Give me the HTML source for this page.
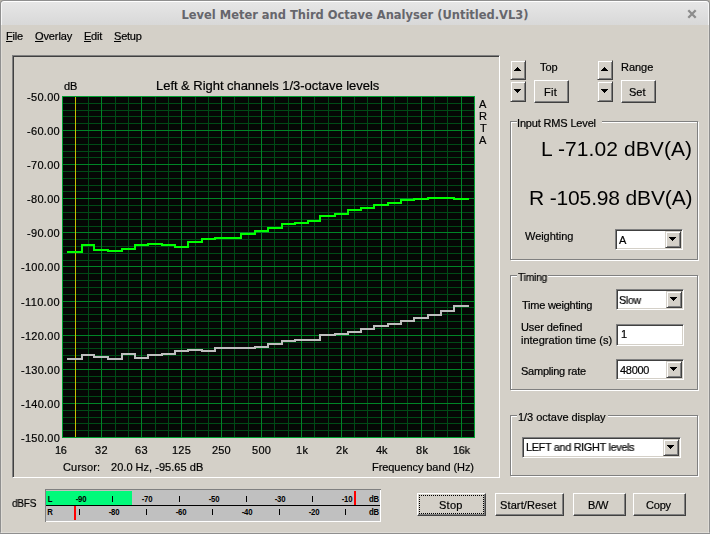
<!DOCTYPE html>
<html><head><meta charset="utf-8"><title>Level Meter and Third Octave Analyser</title>
<style>
html,body{margin:0;padding:0}
body{width:710px;height:534px;overflow:hidden;background:#d4d0c8;position:relative;font-family:"Liberation Sans",sans-serif;color:#000}
.abs{position:absolute}
.t{white-space:pre;font-family:"Liberation Sans",sans-serif;will-change:transform;-webkit-text-stroke:0.2px #000}
.big{-webkit-text-stroke:0}
.grp{box-sizing:border-box;border:1px solid #808080;box-shadow:1px 1px 0 #fff, inset 1px 1px 0 #fff}
.sunk{box-sizing:border-box;border-top:1px solid #808080;border-left:1px solid #808080;border-right:1px solid #fff;border-bottom:1px solid #fff;box-shadow:inset 1px 1px 0 #404040}
.btn{box-sizing:border-box;background:#d4d0c8;border-top:1px solid #fff;border-left:1px solid #fff;border-right:1px solid #404040;border-bottom:1px solid #404040;box-shadow:inset -1px -1px 0 #808080}
.cb{border-top-color:#d4d0c8;border-left-color:#d4d0c8;box-shadow:inset 1px 1px 0 #fff, inset -1px -1px 0 #808080}
.focus{border:1px dotted #000}
.edit{box-sizing:border-box;background:#fff;border-top:1px solid #808080;border-left:1px solid #808080;border-right:1px solid #fff;border-bottom:1px solid #fff;box-shadow:inset 1px 1px 0 #404040, inset -1px -1px 0 #d4d0c8}
.ml{font-size:9px;line-height:9px;font-weight:bold;text-align:center;white-space:pre;letter-spacing:-0.2px;transform:scaleX(0.86)}
#tb{left:0;top:0;width:710px;height:25px;box-sizing:border-box;border:1px solid #8f8f8f;border-bottom:none;border-radius:4px 4px 0 0;background:linear-gradient(#e7e7e7,#d8d8d8);box-shadow:inset 0 1px 0 #fff, inset 1px 0 0 #f6f6f6, inset -1px 0 0 #f6f6f6}
#tt{left:0;top:7px;width:710px;text-align:center;font-family:"DejaVu Sans Condensed","DejaVu Sans",sans-serif;font-weight:bold;font-size:12.75px;line-height:15px;color:#66666c;white-space:pre}
#lb{left:0;top:25px;width:1px;height:509px;background:#8f8f8f;box-shadow:1px 0 0 rgba(255,255,255,0.25)}
#rb{left:709px;top:25px;width:1px;height:509px;background:#8f8f8f;box-shadow:-1px 0 0 rgba(255,255,255,0.25)}
#bb{left:0;top:533px;width:710px;height:1px;background:#8f8f8f;box-shadow:0 -1px 0 rgba(255,255,255,0.25)}
</style></head><body>
<div class="abs" style="left:0;top:0;width:710px;height:6px;background:#b6b2a8"></div>
<div class="abs" id="tb"></div>
<div class="abs" id="tt">Level Meter and Third Octave Analyser (Untitled.VL3)</div>
<svg class="abs" style="left:687px;top:9px" width="10" height="10" viewBox="0 0 10 10"><path d="M1.3 1.3 L8.7 8.7 M8.7 1.3 L1.3 8.7" stroke="#8c8c8c" stroke-width="2.3" fill="none"/></svg>
<div class="abs" id="lb"></div><div class="abs" id="rb"></div><div class="abs" id="bb"></div>
<div class="abs grp" style="left:510px;top:121px;width:188px;height:139px;"></div>
<div class="abs " style="left:517px;top:121px;width:85px;height:2px;background:#d4d0c8;"></div>
<div class="abs grp" style="left:510px;top:275px;width:188px;height:115px;"></div>
<div class="abs " style="left:517px;top:275px;width:31px;height:2px;background:#d4d0c8;"></div>
<div class="abs grp" style="left:510px;top:415px;width:188px;height:61px;"></div>
<div class="abs " style="left:517px;top:415px;width:91px;height:2px;background:#d4d0c8;"></div>
<div class="abs sunk" style="left:12px;top:55px;width:488px;height:423px;"></div>
<div class="abs btn cb" style="left:510px;top:60px;width:16px;height:20px;"><span class="abs" style="left:3px;top:5px;line-height:0"><svg width="7" height="4" viewBox="0 0 7 4" shape-rendering="crispEdges"><path d="M3 0h1v1h1v1h1v1h1v1h-7v-1h1v-1h1v-1h1z" fill="#000"/></svg></span></div>
<div class="abs btn cb" style="left:510px;top:81px;width:16px;height:21px;"><span class="abs" style="left:3px;top:6px;line-height:0"><svg width="7" height="4" viewBox="0 0 7 4" shape-rendering="crispEdges"><path d="M0 0h7v1h-1v1h-1v1h-1v1h-1v-1h-1v-1h-1v-1h-1z" fill="#000"/></svg></span></div>
<div class="abs btn cb" style="left:597px;top:60px;width:16px;height:20px;"><span class="abs" style="left:3px;top:5px;line-height:0"><svg width="7" height="4" viewBox="0 0 7 4" shape-rendering="crispEdges"><path d="M3 0h1v1h1v1h1v1h1v1h-7v-1h1v-1h1v-1h1z" fill="#000"/></svg></span></div>
<div class="abs btn cb" style="left:597px;top:81px;width:16px;height:21px;"><span class="abs" style="left:3px;top:6px;line-height:0"><svg width="7" height="4" viewBox="0 0 7 4" shape-rendering="crispEdges"><path d="M0 0h7v1h-1v1h-1v1h-1v1h-1v-1h-1v-1h-1v-1h-1z" fill="#000"/></svg></span></div>
<div class="abs btn" style="left:534px;top:80px;width:35px;height:23px;"></div>
<div class="abs btn" style="left:621px;top:80px;width:35px;height:23px;"></div>
<div class="abs btn" style="left:417px;top:493px;width:69px;height:23px;"><div class="abs focus" style="left:1px;top:1px;width:63px;height:17px"></div></div>
<div class="abs btn" style="left:495px;top:493px;width:69px;height:23px;"></div>
<div class="abs btn" style="left:573px;top:493px;width:53px;height:23px;"></div>
<div class="abs btn" style="left:633px;top:493px;width:53px;height:23px;"></div>
<div class="abs edit" style="left:615px;top:229px;width:68px;height:21px;"><div class="abs btn cb" style="right:1px;top:1px;width:16px;height:17px"><span class="abs" style="left:3px;top:4px;line-height:0"><svg width="7" height="4" viewBox="0 0 7 4" shape-rendering="crispEdges"><path d="M0 0h7v1h-1v1h-1v1h-1v1h-1v-1h-1v-1h-1v-1h-1z" fill="#000"/></svg></span></div></div>
<div class="abs edit" style="left:616px;top:289px;width:68px;height:21px;"><div class="abs btn cb" style="right:1px;top:1px;width:16px;height:17px"><span class="abs" style="left:3px;top:4px;line-height:0"><svg width="7" height="4" viewBox="0 0 7 4" shape-rendering="crispEdges"><path d="M0 0h7v1h-1v1h-1v1h-1v1h-1v-1h-1v-1h-1v-1h-1z" fill="#000"/></svg></span></div></div>
<div class="abs edit" style="left:616px;top:324px;width:68px;height:22px;"></div>
<div class="abs edit" style="left:616px;top:359px;width:68px;height:21px;"><div class="abs btn cb" style="right:1px;top:1px;width:16px;height:17px"><span class="abs" style="left:3px;top:4px;line-height:0"><svg width="7" height="4" viewBox="0 0 7 4" shape-rendering="crispEdges"><path d="M0 0h7v1h-1v1h-1v1h-1v1h-1v-1h-1v-1h-1v-1h-1z" fill="#000"/></svg></span></div></div>
<div class="abs edit" style="left:522px;top:437px;width:159px;height:21px;"><div class="abs btn cb" style="right:1px;top:1px;width:16px;height:17px"><span class="abs" style="left:3px;top:4px;line-height:0"><svg width="7" height="4" viewBox="0 0 7 4" shape-rendering="crispEdges"><path d="M0 0h7v1h-1v1h-1v1h-1v1h-1v-1h-1v-1h-1v-1h-1z" fill="#000"/></svg></span></div></div>
<svg class="abs" style="left:0;top:0" width="710" height="534" viewBox="0 0 710 534"><rect x="62" y="96" width="413" height="342" fill="#050705"/><rect x="62" y="103" width="413" height="1" fill="#004a16"/><rect x="62" y="110" width="413" height="1" fill="#004a16"/><rect x="62" y="116" width="413" height="1" fill="#004a16"/><rect x="62" y="123" width="413" height="1" fill="#004a16"/><rect x="62" y="137" width="413" height="1" fill="#004a16"/><rect x="62" y="144" width="413" height="1" fill="#004a16"/><rect x="62" y="151" width="413" height="1" fill="#004a16"/><rect x="62" y="157" width="413" height="1" fill="#004a16"/><rect x="62" y="171" width="413" height="1" fill="#004a16"/><rect x="62" y="178" width="413" height="1" fill="#004a16"/><rect x="62" y="185" width="413" height="1" fill="#004a16"/><rect x="62" y="191" width="413" height="1" fill="#004a16"/><rect x="62" y="205" width="413" height="1" fill="#004a16"/><rect x="62" y="212" width="413" height="1" fill="#004a16"/><rect x="62" y="219" width="413" height="1" fill="#004a16"/><rect x="62" y="226" width="413" height="1" fill="#004a16"/><rect x="62" y="239" width="413" height="1" fill="#004a16"/><rect x="62" y="246" width="413" height="1" fill="#004a16"/><rect x="62" y="253" width="413" height="1" fill="#004a16"/><rect x="62" y="260" width="413" height="1" fill="#004a16"/><rect x="62" y="273" width="413" height="1" fill="#004a16"/><rect x="62" y="280" width="413" height="1" fill="#004a16"/><rect x="62" y="287" width="413" height="1" fill="#004a16"/><rect x="62" y="294" width="413" height="1" fill="#004a16"/><rect x="62" y="307" width="413" height="1" fill="#004a16"/><rect x="62" y="314" width="413" height="1" fill="#004a16"/><rect x="62" y="321" width="413" height="1" fill="#004a16"/><rect x="62" y="328" width="413" height="1" fill="#004a16"/><rect x="62" y="342" width="413" height="1" fill="#004a16"/><rect x="62" y="348" width="413" height="1" fill="#004a16"/><rect x="62" y="355" width="413" height="1" fill="#004a16"/><rect x="62" y="362" width="413" height="1" fill="#004a16"/><rect x="62" y="376" width="413" height="1" fill="#004a16"/><rect x="62" y="382" width="413" height="1" fill="#004a16"/><rect x="62" y="389" width="413" height="1" fill="#004a16"/><rect x="62" y="396" width="413" height="1" fill="#004a16"/><rect x="62" y="410" width="413" height="1" fill="#004a16"/><rect x="62" y="417" width="413" height="1" fill="#004a16"/><rect x="62" y="423" width="413" height="1" fill="#004a16"/><rect x="62" y="430" width="413" height="1" fill="#004a16"/><rect x="75" y="96" width="1" height="342" fill="#004a16"/><rect x="88" y="96" width="1" height="342" fill="#004a16"/><rect x="115" y="96" width="1" height="342" fill="#004a16"/><rect x="128" y="96" width="1" height="342" fill="#004a16"/><rect x="155" y="96" width="1" height="342" fill="#004a16"/><rect x="168" y="96" width="1" height="342" fill="#004a16"/><rect x="195" y="96" width="1" height="342" fill="#004a16"/><rect x="208" y="96" width="1" height="342" fill="#004a16"/><rect x="234" y="96" width="1" height="342" fill="#004a16"/><rect x="248" y="96" width="1" height="342" fill="#004a16"/><rect x="274" y="96" width="1" height="342" fill="#004a16"/><rect x="288" y="96" width="1" height="342" fill="#004a16"/><rect x="314" y="96" width="1" height="342" fill="#004a16"/><rect x="328" y="96" width="1" height="342" fill="#004a16"/><rect x="354" y="96" width="1" height="342" fill="#004a16"/><rect x="367" y="96" width="1" height="342" fill="#004a16"/><rect x="394" y="96" width="1" height="342" fill="#004a16"/><rect x="407" y="96" width="1" height="342" fill="#004a16"/><rect x="434" y="96" width="1" height="342" fill="#004a16"/><rect x="447" y="96" width="1" height="342" fill="#004a16"/><rect x="62" y="130" width="413" height="1" fill="#008426"/><rect x="62" y="164" width="413" height="1" fill="#008426"/><rect x="62" y="198" width="413" height="1" fill="#008426"/><rect x="62" y="232" width="413" height="1" fill="#008426"/><rect x="62" y="266" width="413" height="1" fill="#008426"/><rect x="62" y="301" width="413" height="1" fill="#008426"/><rect x="62" y="335" width="413" height="1" fill="#008426"/><rect x="62" y="369" width="413" height="1" fill="#008426"/><rect x="62" y="403" width="413" height="1" fill="#008426"/><rect x="101" y="96" width="1" height="342" fill="#008426"/><rect x="141" y="96" width="1" height="342" fill="#008426"/><rect x="181" y="96" width="1" height="342" fill="#008426"/><rect x="221" y="96" width="1" height="342" fill="#008426"/><rect x="261" y="96" width="1" height="342" fill="#008426"/><rect x="301" y="96" width="1" height="342" fill="#008426"/><rect x="341" y="96" width="1" height="342" fill="#008426"/><rect x="381" y="96" width="1" height="342" fill="#008426"/><rect x="421" y="96" width="1" height="342" fill="#008426"/><rect x="461" y="96" width="1" height="342" fill="#008426"/><rect x="62.5" y="96.5" width="412" height="341" fill="none" stroke="#00a030" stroke-width="1"/><rect x="75" y="97" width="1" height="340" fill="#c8c000"/><path d="M67 359 L82 359 L82 355 L94 355 L94 357 L108 357 L108 359 L122 359 L122 354 L135 354 L135 358 L148 358 L148 355 L162 355 L162 354 L175 354 L175 351 L188 351 L188 350 L202 350 L202 351 L215 351 L215 348 L228 348 L228 348 L241 348 L241 348 L255 348 L255 347 L268 347 L268 344 L282 344 L282 341 L295 341 L295 340 L308 340 L308 340 L320 340 L320 335 L335 335 L335 334 L348 334 L348 332 L361 332 L361 329 L374 329 L374 326 L388 326 L388 324 L401 324 L401 321 L414 321 L414 318 L428 318 L428 315 L441 315 L441 311 L454 311 L454 306 L469 306" fill="none" stroke="#bebebe" stroke-width="2" stroke-linejoin="miter" shape-rendering="crispEdges"/><path d="M67 252 L82 252 L82 245 L94 245 L94 250 L108 250 L108 251 L122 251 L122 249 L135 249 L135 245 L148 245 L148 244 L162 244 L162 245 L175 245 L175 247 L188 247 L188 242 L202 242 L202 239 L215 239 L215 238 L228 238 L228 238 L241 238 L241 234 L255 234 L255 231 L268 231 L268 228 L282 228 L282 224 L295 224 L295 223 L308 223 L308 221 L320 221 L320 216 L335 216 L335 214 L348 214 L348 210 L361 210 L361 208 L374 208 L374 205 L388 205 L388 203 L401 203 L401 200 L414 200 L414 199 L428 199 L428 198 L441 198 L441 198 L454 198 L454 199 L469 199" fill="none" stroke="#00ff00" stroke-width="2" stroke-linejoin="miter" shape-rendering="crispEdges"/></svg>
<div class="abs t " style="left:6.00px;top:31px;font-size:11px;line-height:11px;letter-spacing:-0.233px;"><u>F</u>ile</div>
<div class="abs t " style="left:35.00px;top:31px;font-size:11px;line-height:11px;letter-spacing:-0.117px;"><u>O</u>verlay</div>
<div class="abs t " style="left:84.00px;top:31px;font-size:11px;line-height:11px;letter-spacing:-0.233px;"><u>E</u>dit</div>
<div class="abs t " style="left:114.00px;top:31px;font-size:11px;line-height:11px;letter-spacing:-0.225px;"><u>S</u>etup</div>
<div class="abs t " style="left:26.80px;top:92px;font-size:11px;line-height:11px;letter-spacing:0.300px;">-50.00</div>
<div class="abs t " style="left:26.80px;top:126px;font-size:11px;line-height:11px;letter-spacing:0.300px;">-60.00</div>
<div class="abs t " style="left:26.80px;top:160px;font-size:11px;line-height:11px;letter-spacing:0.300px;">-70.00</div>
<div class="abs t " style="left:26.80px;top:194px;font-size:11px;line-height:11px;letter-spacing:0.300px;">-80.00</div>
<div class="abs t " style="left:26.80px;top:228px;font-size:11px;line-height:11px;letter-spacing:0.300px;">-90.00</div>
<div class="abs t " style="left:20.80px;top:262px;font-size:11px;line-height:11px;letter-spacing:0.250px;">-100.00</div>
<div class="abs t " style="left:21.20px;top:297px;font-size:11px;line-height:11px;letter-spacing:0.350px;">-110.00</div>
<div class="abs t " style="left:20.80px;top:331px;font-size:11px;line-height:11px;letter-spacing:0.250px;">-120.00</div>
<div class="abs t " style="left:20.80px;top:365px;font-size:11px;line-height:11px;letter-spacing:0.250px;">-130.00</div>
<div class="abs t " style="left:20.80px;top:399px;font-size:11px;line-height:11px;letter-spacing:0.250px;">-140.00</div>
<div class="abs t " style="left:20.80px;top:433px;font-size:11px;line-height:11px;letter-spacing:0.250px;">-150.00</div>
<div class="abs t " style="left:55.10px;top:445px;font-size:11px;line-height:11px;letter-spacing:-0.300px;transform:scaleX(0.991);transform-origin:1px 50%;">16</div>
<div class="abs t " style="left:94.80px;top:445px;font-size:11px;line-height:11px;letter-spacing:0.300px;">32</div>
<div class="abs t " style="left:134.85px;top:445px;font-size:11px;line-height:11px;letter-spacing:0.300px;">63</div>
<div class="abs t " style="left:171.80px;top:445px;font-size:11px;line-height:11px;letter-spacing:0.250px;">125</div>
<div class="abs t " style="left:212.00px;top:445px;font-size:11px;line-height:11px;letter-spacing:0.100px;">250</div>
<div class="abs t " style="left:251.85px;top:445px;font-size:11px;line-height:11px;letter-spacing:0.300px;">500</div>
<div class="abs t " style="left:295.52px;top:445px;font-size:11px;line-height:11px;letter-spacing:0.350px;">1k</div>
<div class="abs t " style="left:335.57px;top:445px;font-size:11px;line-height:11px;letter-spacing:0.350px;">2k</div>
<div class="abs t " style="left:376.30px;top:445px;font-size:11px;line-height:11px;">4k</div>
<div class="abs t " style="left:416.17px;top:445px;font-size:11px;line-height:11px;letter-spacing:0.350px;">8k</div>
<div class="abs t " style="left:452.85px;top:445px;font-size:11px;line-height:11px;letter-spacing:-0.300px;transform:scaleX(0.982);transform-origin:1px 50%;">16k</div>
<div class="abs t " style="left:64.00px;top:81px;font-size:11px;line-height:11px;">dB</div>
<div class="abs t " style="left:155.50px;top:79px;font-size:13px;line-height:13px;letter-spacing:-0.039px;">Left &amp; Right channels 1/3-octave levels</div>
<div class="abs t " style="left:479.00px;top:99px;font-size:11px;line-height:11px;">A</div>
<div class="abs t " style="left:478.50px;top:111px;font-size:11px;line-height:11px;">R</div>
<div class="abs t " style="left:479.50px;top:123px;font-size:11px;line-height:11px;">T</div>
<div class="abs t " style="left:479.00px;top:135px;font-size:11px;line-height:11px;">A</div>
<div class="abs t " style="left:62.70px;top:462px;font-size:11px;line-height:11px;letter-spacing:0.167px;">Cursor:</div>
<div class="abs t " style="left:110.70px;top:462px;font-size:11px;line-height:11px;letter-spacing:0.029px;">20.0 Hz, -95.65 dB</div>
<div class="abs t " style="left:371.60px;top:462px;font-size:11px;line-height:11px;letter-spacing:-0.072px;">Frequency band (Hz)</div>
<div class="abs t " style="left:11.80px;top:498px;font-size:11px;line-height:11px;letter-spacing:-0.300px;transform:scaleX(0.920);transform-origin:0px 50%;">dBFS</div>
<div class="abs t " style="left:540.00px;top:62px;font-size:11px;line-height:11px;">Top</div>
<div class="abs t " style="left:620.60px;top:62px;font-size:11px;line-height:11px;letter-spacing:-0.025px;">Range</div>
<div class="abs t " style="left:516.70px;top:118px;font-size:11px;line-height:11px;letter-spacing:-0.164px;">Input RMS Level</div>
<div class="abs t big" style="left:541.40px;top:138px;font-size:21px;line-height:21px;letter-spacing:0.093px;">L -71.02 dBV(A)</div>
<div class="abs t big" style="left:528.90px;top:187px;font-size:21px;line-height:21px;letter-spacing:-0.147px;">R -105.98 dBV(A)</div>
<div class="abs t " style="left:524.90px;top:231px;font-size:11px;line-height:11px;letter-spacing:-0.050px;">Weighting</div>
<div class="abs t " style="left:518.20px;top:272px;font-size:11px;line-height:11px;letter-spacing:-0.300px;transform:scaleX(0.941);transform-origin:0px 50%;">Timing</div>
<div class="abs t " style="left:521.90px;top:300px;font-size:11px;line-height:11px;letter-spacing:-0.238px;">Time weighting</div>
<div class="abs t " style="left:521.00px;top:322px;font-size:11px;line-height:11px;letter-spacing:-0.091px;">User defined</div>
<div class="abs t " style="left:521.00px;top:335px;font-size:11px;line-height:11px;">integration time (s)</div>
<div class="abs t " style="left:520.90px;top:366px;font-size:11px;line-height:11px;letter-spacing:-0.233px;">Sampling rate</div>
<div class="abs t " style="left:517.50px;top:412px;font-size:11px;line-height:11px;letter-spacing:-0.029px;">1/3 octave display</div>
<div class="abs t " style="left:619.00px;top:235px;font-size:11px;line-height:11px;">A</div>
<div class="abs t " style="left:618.70px;top:295px;font-size:11px;line-height:11px;letter-spacing:-0.300px;transform:scaleX(0.964);transform-origin:1px 50%;">Slow</div>
<div class="abs t " style="left:621.00px;top:329px;font-size:11px;line-height:11px;">1</div>
<div class="abs t " style="left:620.00px;top:365px;font-size:11px;line-height:11px;letter-spacing:-0.300px;transform:scaleX(0.997);transform-origin:0px 50%;">48000</div>
<div class="abs t " style="left:525.70px;top:442px;font-size:11px;line-height:11px;letter-spacing:-0.300px;transform:scaleX(0.984);transform-origin:1px 50%;">LEFT and RIGHT levels</div>
<div class="abs t " style="left:543.50px;top:87px;font-size:11px;line-height:11px;letter-spacing:0.300px;">Fit</div>
<div class="abs t " style="left:629.00px;top:87px;font-size:11px;line-height:11px;">Set</div>
<div class="abs t " style="left:438.60px;top:500px;font-size:11px;line-height:11px;letter-spacing:0.267px;">Stop</div>
<div class="abs t " style="left:499.80px;top:500px;font-size:11px;line-height:11px;letter-spacing:0.120px;">Start/Reset</div>
<div class="abs t " style="left:587.50px;top:500px;font-size:11px;line-height:11px;letter-spacing:-0.150px;">B/W</div>
<div class="abs t " style="left:645.60px;top:500px;font-size:11px;line-height:11px;letter-spacing:-0.200px;">Copy</div>
<div class="abs" style="left:45px;top:489px;width:336px;height:33px;background:#c0c0c0;box-shadow:inset 1px 1px 0 #808080, inset -1px -1px 0 #fff"></div>
<div class="abs" style="left:46px;top:491px;width:86px;height:14px;background:#00fa7a"></div>
<div class="abs" style="left:46px;top:505px;width:334px;height:1px;background:#000"></div>
<div class="abs" style="left:74px;top:506px;width:2px;height:14px;background:#f00"></div>
<div class="abs" style="left:354px;top:491px;width:2px;height:14px;background:#f00"></div>
<div class="abs ml" style="left:65.8px;top:495px;width:30px">-90</div>
<div class="abs" style="left:79px;top:509px;width:1px;height:6px;background:#000"></div>
<div class="abs ml" style="left:132.2px;top:495px;width:30px">-70</div>
<div class="abs" style="left:146px;top:509px;width:1px;height:6px;background:#000"></div>
<div class="abs ml" style="left:198.8px;top:495px;width:30px">-50</div>
<div class="abs" style="left:212px;top:509px;width:1px;height:6px;background:#000"></div>
<div class="abs ml" style="left:265.2px;top:495px;width:30px">-30</div>
<div class="abs" style="left:279px;top:509px;width:1px;height:6px;background:#000"></div>
<div class="abs ml" style="left:331.8px;top:495px;width:30px">-10</div>
<div class="abs" style="left:345px;top:509px;width:1px;height:6px;background:#000"></div>
<div class="abs ml" style="left:99.0px;top:508px;width:30px">-80</div>
<div class="abs" style="left:112px;top:496px;width:1px;height:6px;background:#000"></div>
<div class="abs ml" style="left:165.5px;top:508px;width:30px">-60</div>
<div class="abs" style="left:179px;top:496px;width:1px;height:6px;background:#000"></div>
<div class="abs ml" style="left:232.0px;top:508px;width:30px">-40</div>
<div class="abs" style="left:246px;top:496px;width:1px;height:6px;background:#000"></div>
<div class="abs ml" style="left:298.5px;top:508px;width:30px">-20</div>
<div class="abs" style="left:312px;top:496px;width:1px;height:6px;background:#000"></div>
<div class="abs ml" style="left:34.5px;top:495px;width:30px">L</div>
<div class="abs ml" style="left:34.5px;top:508px;width:30px">R</div>
<div class="abs ml" style="left:358.5px;top:495px;width:30px">dB</div>
<div class="abs ml" style="left:358.5px;top:508px;width:30px">dB</div>
</body></html>
